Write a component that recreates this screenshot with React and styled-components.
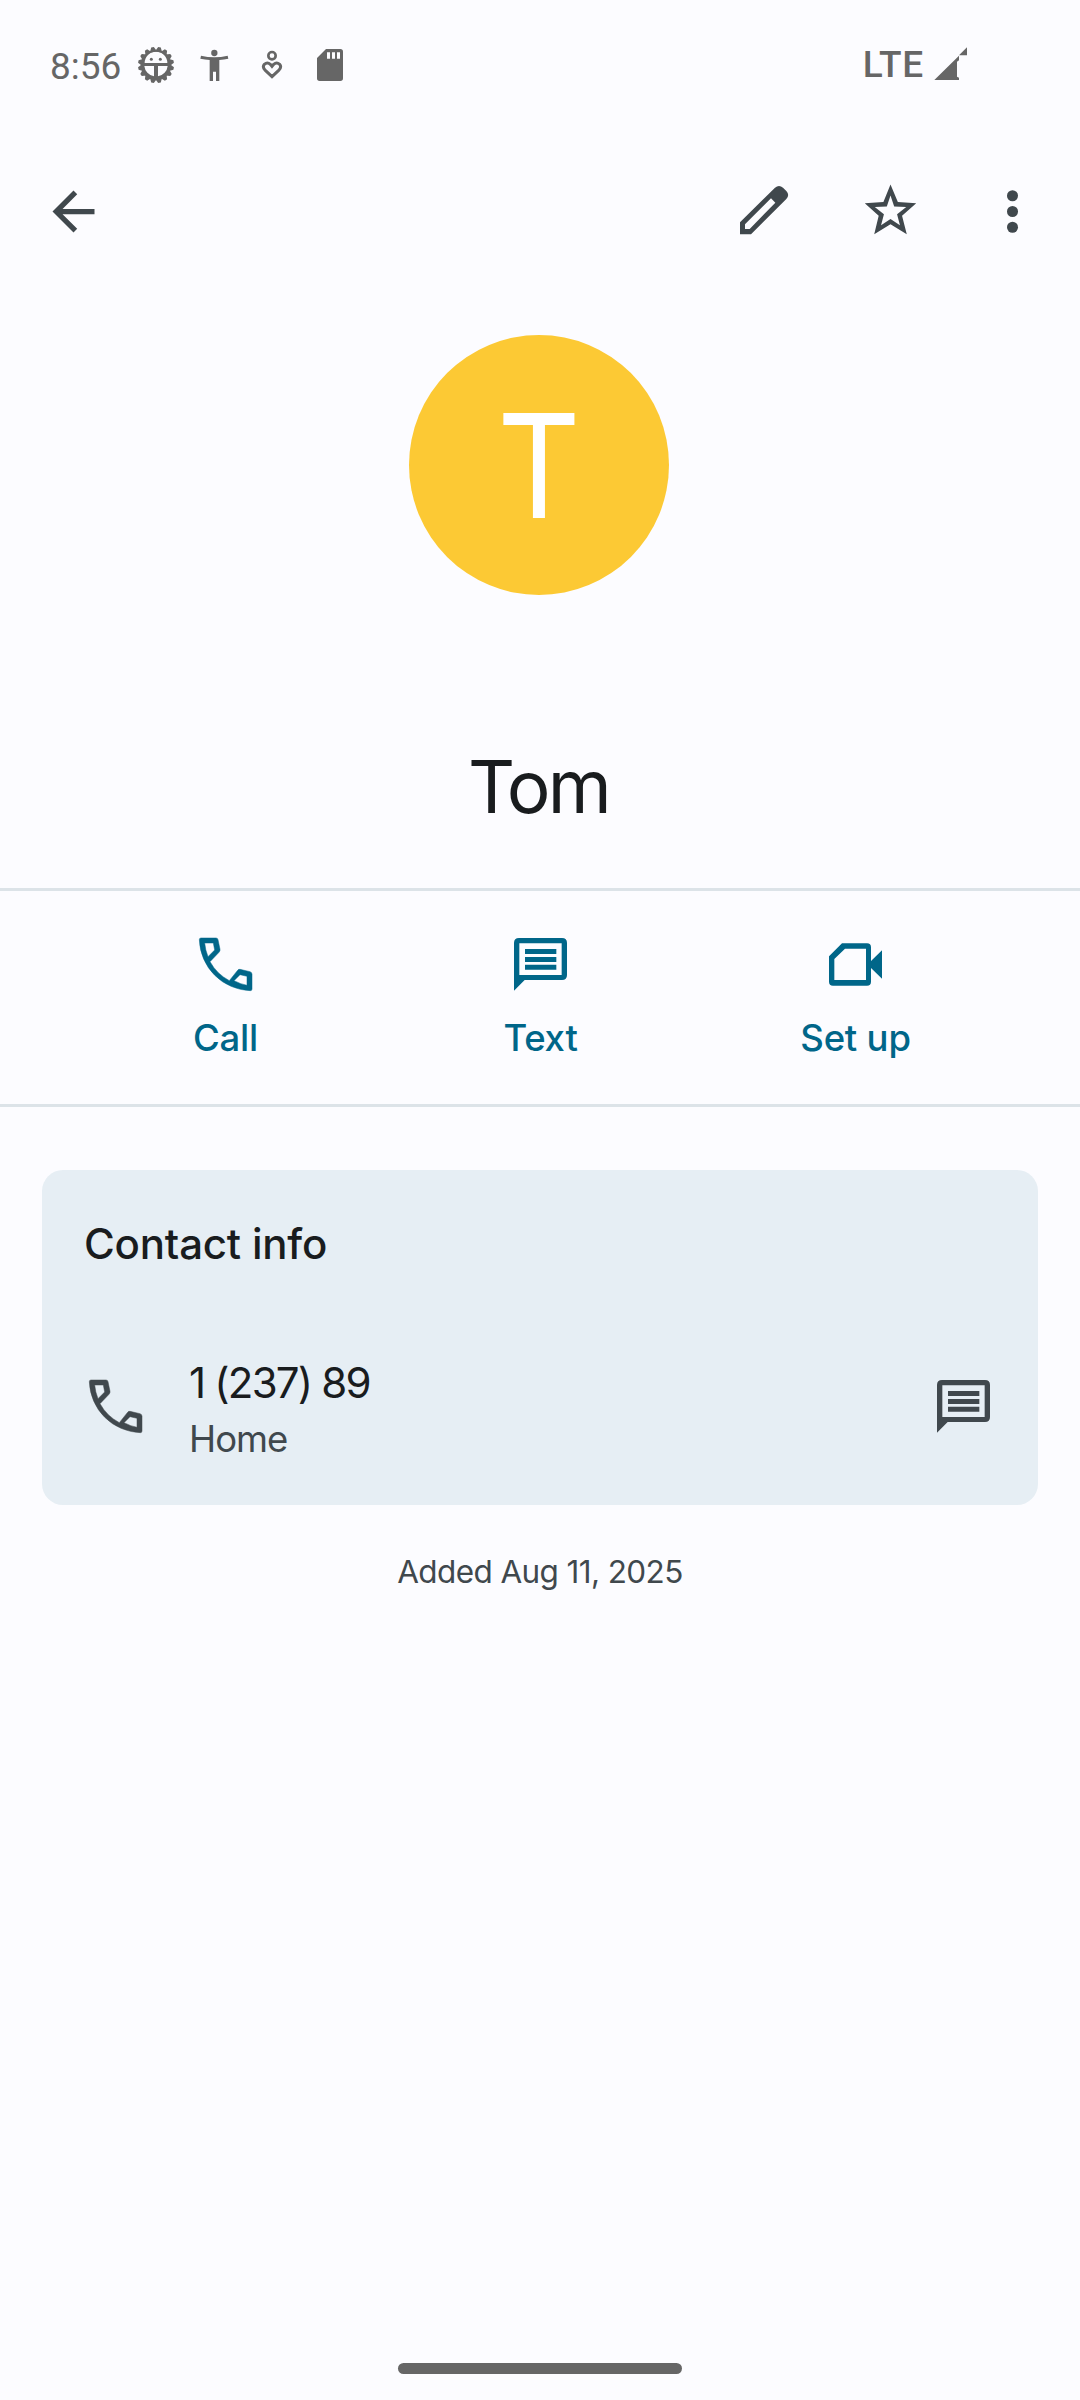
import React from "react";
import styled, { createGlobalStyle } from "styled-components";

const color = {
  page: "#fcfcff",
  ink: "#191c1e",
  muted: "#40484d",
  accent: "#006689",
  line: "#dce3e8",
  card: "#e6eef4",
  status: "#666666",
  avatar: "#fcc934",
};

const GlobalStyle = createGlobalStyle`
  body {
    margin: 0;
    background: ${color.page};
    font-family: Inter, "Liberation Sans", sans-serif;
  }
`;

const Screen = styled.div`
  width: 1080px;
  height: 2400px;
  display: flex;
  flex-direction: column;
  background: ${color.page};
  color: ${color.ink};
  overflow: hidden;
`;

const StatusBar = styled.header`
  height: 130px;
  flex: none;
  display: flex;
  align-items: center;
  justify-content: space-between;
  padding: 0 112px 0 50px;
  box-sizing: border-box;
  color: ${color.status};
  font-family: Roboto, sans-serif;
  font-size: 37px;
  line-height: 50px;
`;

const StatusGroup = styled.div`
  display: flex;
  align-items: center;
`;

const Clock = styled.span`
  width: 86px;
  padding-top: 4px;
`;

const Network = styled.span`
  font-weight: 500;
  letter-spacing: 0.8px;
  margin-right: 10px;
`;

const StatusIcon = styled.svg`
  display: block;
  width: ${(p) => p.$w}px;
  height: 48px;
  margin-right: ${(p) => p.$gap || 0}px;
  fill: currentColor;
`;

const TopBar = styled.nav`
  height: 163px;
  flex: none;
  display: flex;
  align-items: center;
  justify-content: space-between;
  padding: 0 36px 0 42px;
  box-sizing: border-box;
  color: ${color.muted};
`;

const TopActions = styled.div`
  display: flex;
`;

const IconButton = styled.button`
  display: flex;
  padding: 0;
  margin: 0 ${(p) => p.$gap || 0}px 0 0;
  border: 0;
  background: none;
  color: inherit;
`;

const Glyph = styled.svg`
  display: block;
  width: 63px;
  height: 63px;
  fill: currentColor;
`;

const Avatar = styled.div`
  width: 260px;
  height: 260px;
  flex: none;
  margin: 42px 0 0 409px;
  border-radius: 50%;
  background: ${color.avatar};
  color: #fff;
  display: flex;
  align-items: center;
  justify-content: center;
`;

const Initial = styled.span`
  font-size: 145px;
  line-height: 260px;
  padding-top: 2px;
  transform: scaleX(0.89);
`;

const Name = styled.h1`
  margin: 146px 0 56px;
  flex: none;
  font-size: 73px;
  font-weight: 400;
  line-height: 91px;
  letter-spacing: -2.7px;
  text-indent: -3px;
  text-align: center;
`;

const Actions = styled.section`
  height: 219px;
  flex: none;
  box-sizing: border-box;
  border-top: 3px solid ${color.line};
  border-bottom: 3px solid ${color.line};
  padding: 42px 67px 0 68px;
  display: grid;
  grid-template-columns: repeat(3, 1fr);
  color: ${color.accent};
`;

const Action = styled.div`
  display: flex;
  flex-direction: column;
  align-items: center;
  gap: 20px;
`;

const ActionLabel = styled.span`
  font-size: 36.5px;
  font-weight: 500;
  line-height: 44px;
  letter-spacing: -0.2px;
`;

const Card = styled.section`
  height: 335px;
  flex: none;
  margin: 63px 42px 0;
  padding: 48px 43px 0 42px;
  box-sizing: border-box;
  border-radius: 21px;
  background: ${color.card};
`;

const CardTitle = styled.h2`
  margin: 0;
  font-size: 42px;
  font-weight: 500;
  line-height: 51px;
  letter-spacing: -0.2px;
`;

const PhoneRow = styled.div`
  margin-top: 84px;
  display: flex;
  align-items: center;
  color: ${color.muted};
`;

const RowIcon = styled.span`
  margin-bottom: 5px;
`;

const PhoneText = styled.div`
  flex: 1;
  margin-left: 42px;
`;

const Number = styled.div`
  font-size: 42px;
  line-height: 60px;
  letter-spacing: -1.8px;
  color: ${color.ink};
`;

const Kind = styled.div`
  font-size: 36.5px;
  line-height: 52px;
  letter-spacing: -1px;
`;

const Added = styled.p`
  margin: 45px 0 0;
  font-size: 31.5px;
  line-height: 43px;
  letter-spacing: -0.6px;
  text-align: center;
  color: ${color.muted};
`;

const HomeBar = styled.div`
  width: 284px;
  height: 11px;
  flex: none;
  margin: auto auto 26px;
  border-radius: 6px;
  background: ${color.status};
`;

const PhoneGlyph = () => (
  <Glyph viewBox="0 0 189 189">
    <path
      fillRule="evenodd"
      stroke="currentColor"
      strokeWidth="1.5"
      d="M16 20Q16 15 21 15H66Q71 15 72 20L78 49Q79 54 75 58L48 86A143 143 0 0 0 106 143L130 113Q133 108 138 109L168 116Q174 118 174 124V168Q174 173 169 173A158 158 0 0 1 16 20ZM32 30H58L62 51L42 71A143 143 0 0 1 32 30ZM120 143L138 125L159 130V157A143 143 0 0 1 120 143Z"
    />
  </Glyph>
);

const MessageGlyph = () => (
  <Glyph viewBox="0 0 189 189">
    <path
      fillRule="evenodd"
      d="M30 15H159Q174 15 174 30V126Q174 141 159 141H47L15 173V30Q15 15 30 15ZM31 31V126H158V31Z"
    />
    <path d="M48 48H142V63H48ZM48 72H142V87H48ZM48 95H142V110H48Z" />
  </Glyph>
);

const VideoGlyph = () => (
  <Glyph viewBox="0 0 189 189">
    <path
      fillRule="evenodd"
      d="M54 31H129Q141 31 141 43V84L174 52V137L141 105V146Q141 158 129 158H27Q15 158 15 146V70ZM63 47L31 78V141H126V47Z"
    />
  </Glyph>
);

const teeth = Array.from({ length: 16 }, (_, i) => i * 22.5);

export default function App() {
  return (
    <>
      <GlobalStyle />
      <Screen>
        <StatusBar>
          <StatusGroup>
            <Clock>8:56</Clock>
            <StatusIcon $w={40} $gap={24} viewBox="318 33 120 144">
              <path
                fillRule="evenodd"
                d="M333 105a45 45 0 1 1 90 0a45 45 0 1 1 -90 0ZM344 99H412A34 34 0 0 0 344 99ZM343 108A35 35 0 0 0 372 139V108ZM384 108V139A35 35 0 0 0 413 108Z"
              />
              {teeth.map((a) => (
                <path key={a} d="M367 65L374 51H382L389 65Z" transform={`rotate(${a + 11.25} 378 105)`} />
              ))}
              <circle cx="364" cy="88" r="4.5" />
              <circle cx="391" cy="88" r="4.5" />
            </StatusIcon>
            <StatusIcon $w={30} $gap={30} viewBox="510 33 90 144">
              <circle cx="553" cy="69" r="9.5" />
              <path d="M513 77Q553 86 593 77L595 86Q582 89 568 90V153H558V125H549V153H539V90Q525 89 511 86Z" />
            </StatusIcon>
            <StatusIcon $w={24} $gap={32} viewBox="690 33 72 144">
              <circle cx="726" cy="77" r="11" fill="none" stroke="currentColor" strokeWidth="8" />
              <path
                d="M726 140L706 121Q696 111 703 103Q712 95 721 103L726 109L731 103Q740 95 749 103Q756 111 746 121Z"
                fill="none"
                stroke="currentColor"
                strokeWidth="9"
              />
            </StatusIcon>
            <StatusIcon $w={28} viewBox="858 33 84 144">
              <path
                fillRule="evenodd"
                d="M888 57H931Q939 57 939 65V145Q939 153 931 153H869Q861 153 861 145V84ZM891 67V86H900V67ZM906 67V86H915V67ZM921 67V86H930V67Z"
              />
            </StatusIcon>
          </StatusGroup>
          <StatusGroup>
            <Network>LTE</Network>
            <StatusIcon $w={34} viewBox="282 33 102 144">
              <path d="M283 150L357 77V91L351 95V140L357 143V150ZM381 52V76H357Z" />
            </StatusIcon>
          </StatusGroup>
        </StatusBar>

        <TopBar>
          <IconButton aria-label="Back">
            <Glyph viewBox="0 0 24 24">
              <path d="M20 11H7.83l5.59-5.59L12 4l-8 8 8 8 1.41-1.41L7.83 13H20v-2z" />
            </Glyph>
          </IconButton>
          <TopActions>
            <IconButton aria-label="Edit" $gap={64}>
              <Glyph viewBox="0 0 189 189">
                <path
                  fillRule="evenodd"
                  d="M24 163V127L129 23Q141 13 153 23L163 33Q174 45 163 57L57 163ZM39 147H53L130 68L117 55L39 133Z"
                />
              </Glyph>
            </IconButton>
            <IconButton aria-label="Favourite" $gap={59}>
              <Glyph viewBox="0 0.3 24 24">
                <path
                  fillRule="evenodd"
                  d="M12 2L14.8 8.7L21.8 9.2L16.4 13.9L18.2 21L12 17.2L5.8 21L7.5 13.9L2.2 9.2L9.3 8.7ZM12 6.2L10.6 10.4L6 10.6L9.5 13.3L8.4 17.5L12 15.2L15.6 17.5L14.5 13.3L18 10.6L13.4 10.4Z"
                />
              </Glyph>
            </IconButton>
            <IconButton aria-label="More options">
              <Glyph viewBox="0 0 24 24">
                <circle cx="12" cy="6" r="2.1" />
                <circle cx="12" cy="12" r="2.1" />
                <circle cx="12" cy="18" r="2.1" />
              </Glyph>
            </IconButton>
          </TopActions>
        </TopBar>

        <Avatar>
          <Initial>T</Initial>
        </Avatar>
        <Name>Tom</Name>

        <Actions>
          <Action>
            <PhoneGlyph />
            <ActionLabel>Call</ActionLabel>
          </Action>
          <Action>
            <MessageGlyph />
            <ActionLabel>Text</ActionLabel>
          </Action>
          <Action>
            <VideoGlyph />
            <ActionLabel>Set up</ActionLabel>
          </Action>
        </Actions>

        <Card>
          <CardTitle>Contact info</CardTitle>
          <PhoneRow>
            <RowIcon>
              <PhoneGlyph />
            </RowIcon>
            <PhoneText>
              <Number>1 (237) 89</Number>
              <Kind>Home</Kind>
            </PhoneText>
            <RowIcon>
              <MessageGlyph />
            </RowIcon>
          </PhoneRow>
        </Card>
        <Added>Added Aug 11, 2025</Added>

        <HomeBar />
      </Screen>
    </>
  );
}
